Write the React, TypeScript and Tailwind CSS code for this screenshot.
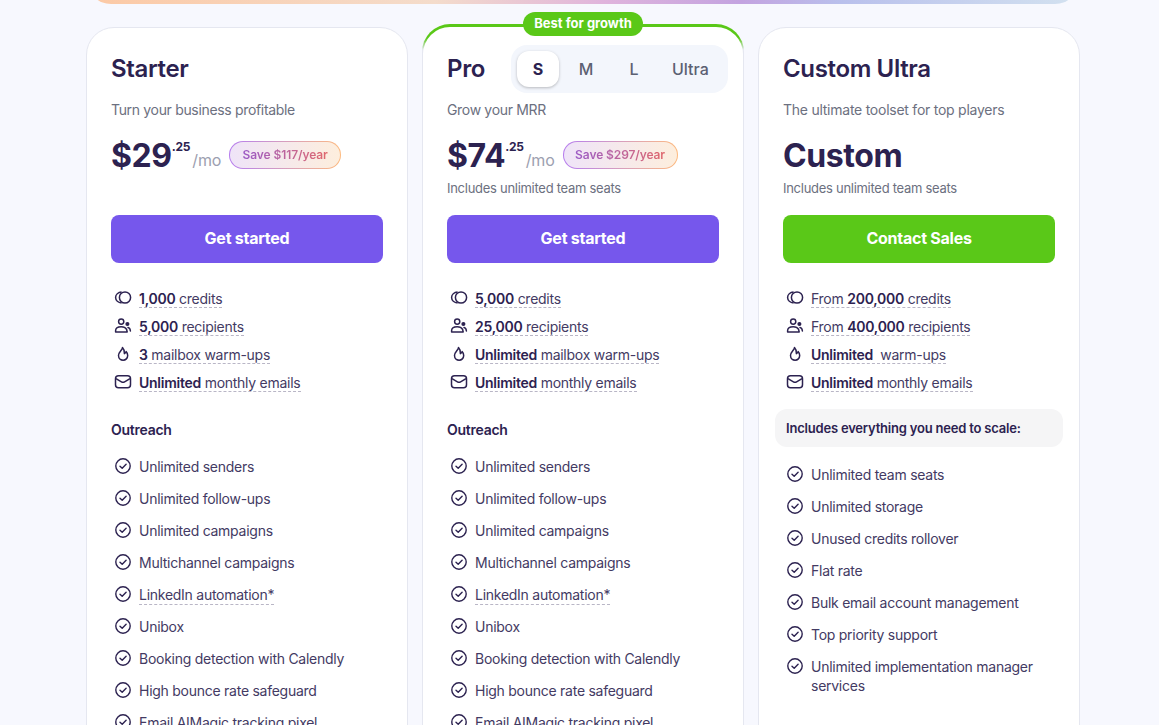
import React from "react";

const ink = "text-[#2c2250]";

function CoinIcon() {
  return (
    <svg width="18" height="18" viewBox="0 0 18 18" fill="none" stroke="#2c2250" strokeWidth="1.5">
      <circle cx="11" cy="8.5" r="5.6" />
      <path d="M7.6 3.1C4.2 3.4 1.6 5.7 1.6 8.5s2.6 5.1 6 5.4" />
    </svg>
  );
}
function UsersIcon() {
  return (
    <svg width="18" height="18" viewBox="0 0 18 18" fill="none" stroke="#2c2250" strokeWidth="1.5" strokeLinecap="round" strokeLinejoin="round">
      <circle cx="7.2" cy="4.6" r="2.6" />
      <path d="M1.6 15v-1.2c0-2.4 2-4 5.6-4s4.6 1.2 5.4 2.6l.6 2.6z" />
      <circle cx="13.4" cy="7" r="1.3" fill="#2c2250" />
      <path d="M14 10.6c1.4.3 2.2 1.4 2.4 3.4" />
    </svg>
  );
}
function FlameIcon() {
  return (
    <svg width="18" height="18" viewBox="0 0 18 18" fill="none" stroke="#2c2250" strokeWidth="1.5" strokeLinejoin="round">
      <path d="M8.5 2.5c0 2.6-4 4.4-4 8.1a4.6 4.6 0 0 0 9.2 0c0-1.6-.6-3-1.6-4-.3 1-1 1.7-1.7 2 .2-2.4-.4-4.6-1.9-6.1z" />
    </svg>
  );
}
function MailIcon() {
  return (
    <svg width="18" height="18" viewBox="0 0 18 18" fill="none" stroke="#2c2250" strokeWidth="1.5" strokeLinejoin="round">
      <rect x="1.5" y="2.8" width="15" height="12" rx="3" />
      <path d="M2 5.6l5.4 3.2c1 .6 2.2.6 3.2 0L16 5.6" />
    </svg>
  );
}
function CheckIcon() {
  return (
    <svg width="18" height="18" viewBox="0 0 18 18" fill="none" stroke="#2c2250" strokeWidth="1.4" strokeLinecap="round" strokeLinejoin="round" className="shrink-0">
      <circle cx="9" cy="9" r="7.2" />
      <path d="M6 9.2l2.2 2.1 3.9-4" />
    </svg>
  );
}

function Quota({ icon, children }: { icon: React.ReactNode; children: React.ReactNode }) {
  return (
    <li className="flex items-center h-7 pl-[3px] gap-[7px]">
      <span className="flex w-[18px] h-[18px] -mt-0.5 shrink-0">{icon}</span>
      <span className="border-b border-dashed border-[#b9b6c6] leading-[17px] text-[14px] tracking-[-0.26px] text-[#433a63]">{children}</span>
    </li>
  );
}

function B({ children }: { children: React.ReactNode }) {
  return <b className="font-semibold text-[#2c2250]">{children}</b>;
}

function Feature({ label, dashed }: { label: string; dashed?: boolean }) {
  return (
    <li className="flex items-start gap-[7px] pl-[3px] pb-[13px] text-[14px] leading-[19px] tracking-[-0.26px] text-[#433a63]">
      <CheckIcon />
      <span className={dashed ? "border-b border-dashed border-[#b9b6c6] -mb-px" : ""}>{label}</span>
    </li>
  );
}

const outreach = [
  "Unlimited senders",
  "Unlimited follow-ups",
  "Unlimited campaigns",
  "Multichannel campaigns",
  "LinkedIn automation*",
  "Unibox",
  "Booking detection with Calendly",
  "High bounce rate safeguard",
  "Email AIMagic tracking pixel",
];

function Outreach() {
  return (
    <>
      <h4 className={`mt-[23px] mb-[17px] px-6 text-[14px] leading-[20px] font-semibold tracking-[-0.26px] ${ink}`}>Outreach</h4>
      <ul className="px-6">
        {outreach.map((f) => (
          <Feature key={f} label={f} dashed={f.startsWith("LinkedIn")} />
        ))}
      </ul>
    </>
  );
}

function Price({ value, save, wide }: { value: string; save: string; wide?: boolean }) {
  return (
    <div className="flex items-center h-9">
      <span className={`mt-[2px] text-[32px] leading-9 font-bold tracking-[-0.4px] ${ink}`}>{value}</span>
      <span className={`self-start mt-[2px] text-[12px] leading-4 font-bold tracking-[-0.2px] ${ink}`}>.25</span>
      <span className="self-end ml-[2px] mb-[1px] text-[16px] leading-6 tracking-[-0.2px] text-[#9ca0b0]">/mo</span>
      <span className={`ml-2 h-7 flex items-center justify-center rounded-full p-px bg-gradient-to-r from-[#b57bee] to-[#fdb97d] ${wide ? "w-[115px]" : "w-[112px]"}`}>
        <span className="w-full h-full flex items-center justify-center rounded-full bg-gradient-to-r from-[#efe4f8] to-[#fdeedd]">
          <span className="text-[12px] font-semibold tracking-[-0.1px] bg-gradient-to-r from-[#9b59c5] to-[#e0676b] bg-clip-text text-transparent">{save}</span>
        </span>
      </span>
    </div>
  );
}

function Cta({ label, green }: { label: string; green?: boolean }) {
  return (
    <button className={`w-full h-12 pb-[2px] rounded-lg text-white text-[16px] font-bold tracking-[-0.25px] ${green ? "bg-[#5ac818]" : "bg-[#7657ec]"}`}>
      {label}
    </button>
  );
}

const cardBase = "w-[322px] shrink-0 bg-white rounded-[28px] border border-[#e5e7f0]";

export default function App() {
  return (
    <div className="h-[725px] overflow-hidden bg-[#f7f8fe] font-['Inter',sans-serif]">
      <div className="ml-[87px] w-[992px] h-[44px] -mt-[40px] rounded-b-[24px] bg-[linear-gradient(90deg,#fcc9a5_0%,#f4dccb_35%,#e0b4dc_52%,#c3a3e0_66%,#b9c0ec_76%,#d3e2f0_100%)]" />
      <div className="flex gap-[14px] ml-[86px] items-start mt-[20px]">
        {/* Starter */}
        <div className={`${cardBase} mt-[3px] h-[900px]`}>
          <div className="px-6 pt-6">
            <h3 className={`text-[24px] leading-[34px] font-semibold tracking-[-0.35px] ${ink}`}>Starter</h3>
            <p className="mt-[14px] text-[14px] leading-5 tracking-[-0.33px] text-[#6c7080]">Turn your business profitable</p>
            <div className="mt-[17px]"><Price value="$29" save="Save $117/year" /></div>
            <div className="mt-[42px]"><Cta label="Get started" /></div>
          </div>
          <ul className="px-6 mt-[22px]">
            <Quota icon={<CoinIcon />}><B>1,000</B> credits</Quota>
            <Quota icon={<UsersIcon />}><B>5,000</B> recipients</Quota>
            <Quota icon={<FlameIcon />}><B>3</B> mailbox warm-ups</Quota>
            <Quota icon={<MailIcon />}><B>Unlimited</B> monthly emails</Quota>
          </ul>
          <Outreach />
        </div>

        {/* Pro */}
        <div className="relative w-[322px] shrink-0 h-[900px] rounded-[28px] px-px pt-[3px] bg-[linear-gradient(180deg,#5ac818_0px,#5ac818_14px,#e5e7f0_26px)]">
          <span className="absolute -top-[12px] left-1/2 -translate-x-1/2 h-6 w-[120px] flex items-center justify-center rounded-full bg-[#5ac818] text-white text-[13px] font-bold">
            Best for growth
          </span>
          <div className="h-full rounded-[27px] bg-white">
            <div className="px-6 pt-[17px]">
              <div className="flex items-center justify-between -mr-[9px] h-[50px]">
                <h3 className={`text-[24px] font-semibold tracking-[-0.35px] ${ink}`}>Pro</h3>
                <div className="flex items-center w-[217px] h-[48px] rounded-2xl bg-[#f3f6fc] px-[6px] text-[16px] text-[#5b6072] font-medium">
                  <span className={`w-[42px] h-9 flex items-center justify-center rounded-xl bg-white shadow-[0_1px_3px_rgba(0,0,0,0.25)] font-bold ${ink}`}>S</span>
                  <span className="ml-[7px] w-[40px] text-center">M</span>
                  <span className="ml-[8px] w-[40px] text-center">L</span>
                  <span className="ml-[18px] text-center">Ultra</span>
                </div>
              </div>
              <p className="mt-[6px] text-[14px] leading-5 tracking-[-0.33px] text-[#6c7080]">Grow your MRR</p>
              <div className="mt-[17px]"><Price value="$74" save="Save $297/year" wide /></div>
              <p className="mt-[5px] text-[13px] leading-5 tracking-[-0.28px] text-[#6c7080]">Includes unlimited team seats</p>
              <div className="mt-[17px]"><Cta label="Get started" /></div>
            </div>
            <ul className="px-6 mt-[22px]">
              <Quota icon={<CoinIcon />}><B>5,000</B> credits</Quota>
              <Quota icon={<UsersIcon />}><B>25,000</B> recipients</Quota>
              <Quota icon={<FlameIcon />}><B>Unlimited</B> mailbox warm-ups</Quota>
              <Quota icon={<MailIcon />}><B>Unlimited</B> monthly emails</Quota>
            </ul>
            <Outreach />
          </div>
        </div>

        {/* Custom Ultra */}
        <div className={`${cardBase} mt-[3px] h-[900px]`}>
          <div className="px-6 pt-6">
            <h3 className={`text-[24px] leading-[34px] font-semibold tracking-[-0.35px] ${ink}`}>Custom Ultra</h3>
            <p className="mt-[14px] text-[14px] leading-5 tracking-[-0.25px] text-[#6c7080]">The ultimate toolset for top players</p>
            <div className={`mt-[17px] h-9 pt-px text-[32px] leading-9 font-bold tracking-[-0.4px] ${ink}`}>Custom</div>
            <p className="mt-[5px] text-[13px] leading-5 tracking-[-0.28px] text-[#6c7080]">Includes unlimited team seats</p>
            <div className="mt-[17px]"><Cta label="Contact Sales" green /></div>
          </div>
          <ul className="px-6 mt-[22px]">
            <Quota icon={<CoinIcon />}>From <B>200,000</B> credits</Quota>
            <Quota icon={<UsersIcon />}>From <B>400,000</B> recipients</Quota>
            <Quota icon={<FlameIcon />}><B>Unlimited</B>&nbsp; warm-ups</Quota>
            <Quota icon={<MailIcon />}><B>Unlimited</B> monthly emails</Quota>
          </ul>
          <div className={`mx-4 mt-3 h-[38px] pt-[2px] flex items-center px-[11px] rounded-xl bg-[#f5f5f6] text-[13px] font-semibold tracking-[-0.2px] ${ink}`}>
            Includes everything you need to scale:
          </div>
          <ul className="px-6 mt-[18px]">
            <Feature label="Unlimited team seats" />
            <Feature label="Unlimited storage" />
            <Feature label="Unused credits rollover" />
            <Feature label="Flat rate" />
            <Feature label="Bulk email account management" />
            <Feature label="Top priority support" />
            <Feature label="Unlimited implementation manager services" />
          </ul>
        </div>
      </div>
    </div>
  );
}
